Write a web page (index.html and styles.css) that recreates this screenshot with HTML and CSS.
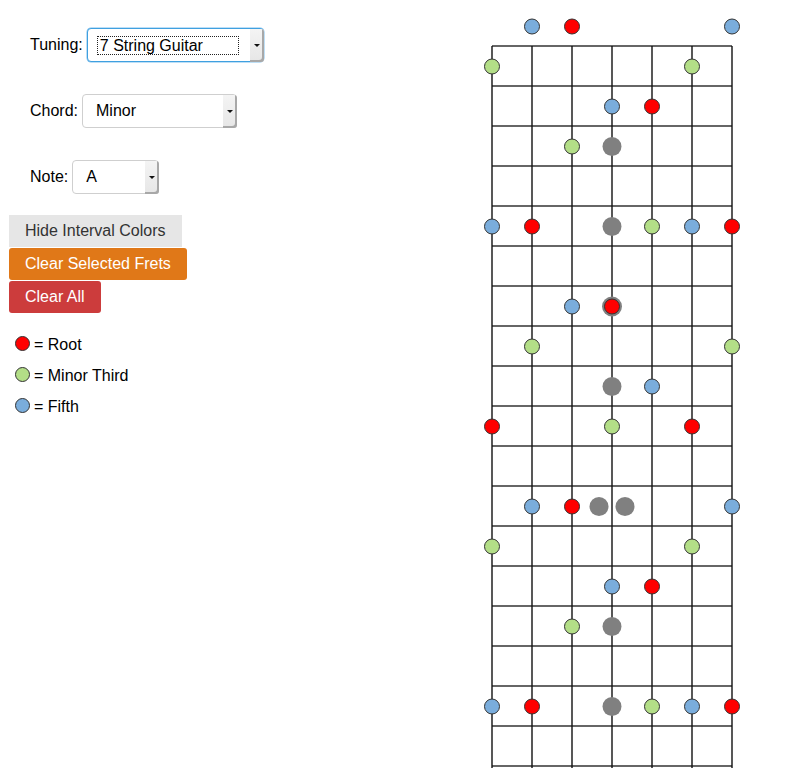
FILE: index.html
```html
<!DOCTYPE html>
<html>
<head>
<meta charset="utf-8">
<link rel="stylesheet" href="styles.css">
</head>
<body>
<div class="page">
  <div class="panel">
    <div class="field field-tuning">
      <span class="label">Tuning:</span>
      <div class="select select-tuning focused">
        <span class="value"><span class="focus-ring">7 String Guitar</span></span>
        <span class="arrow"></span>
      </div>
    </div>
    <div class="field field-chord">
      <span class="label">Chord:</span>
      <div class="select select-chord">
        <span class="value">Minor</span>
        <span class="arrow"></span>
      </div>
    </div>
    <div class="field field-note">
      <span class="label">Note:</span>
      <div class="select select-note">
        <span class="value">A</span>
        <span class="arrow"></span>
      </div>
    </div>
    <div class="buttons">
      <button class="btn btn-gray">Hide Interval Colors</button>
      <button class="btn btn-orange">Clear Selected Frets</button>
      <button class="btn btn-red">Clear All</button>
    </div>
    <ul class="legend">
      <li><span class="dot dot-root"></span>= Root</li>
      <li><span class="dot dot-third"></span>= Minor Third</li>
      <li><span class="dot dot-fifth"></span>= Fifth</li>
    </ul>
  </div>
  <svg class="board" width="300" height="768" viewBox="0 0 300 768">
    <g class="frets">
      <line x1="22" y1="46" x2="262" y2="46"/>
      <line x1="22" y1="86" x2="262" y2="86"/>
      <line x1="22" y1="126" x2="262" y2="126"/>
      <line x1="22" y1="166" x2="262" y2="166"/>
      <line x1="22" y1="206" x2="262" y2="206"/>
      <line x1="22" y1="246" x2="262" y2="246"/>
      <line x1="22" y1="286" x2="262" y2="286"/>
      <line x1="22" y1="326" x2="262" y2="326"/>
      <line x1="22" y1="366" x2="262" y2="366"/>
      <line x1="22" y1="406" x2="262" y2="406"/>
      <line x1="22" y1="446" x2="262" y2="446"/>
      <line x1="22" y1="486" x2="262" y2="486"/>
      <line x1="22" y1="526" x2="262" y2="526"/>
      <line x1="22" y1="566" x2="262" y2="566"/>
      <line x1="22" y1="606" x2="262" y2="606"/>
      <line x1="22" y1="646" x2="262" y2="646"/>
      <line x1="22" y1="686" x2="262" y2="686"/>
      <line x1="22" y1="726" x2="262" y2="726"/>
      <line x1="22" y1="766" x2="262" y2="766"/>
    </g>
    <g class="strings">
      <line x1="22" y1="46" x2="22" y2="780"/>
      <line x1="62" y1="46" x2="62" y2="780"/>
      <line x1="102" y1="46" x2="102" y2="780"/>
      <line x1="142" y1="46" x2="142" y2="780"/>
      <line x1="182" y1="46" x2="182" y2="780"/>
      <line x1="222" y1="46" x2="222" y2="780"/>
      <line x1="262" y1="46" x2="262" y2="780"/>
    </g>
    <g class="inlays">
      <circle cx="142" cy="146.5" r="9.5"/>
      <circle cx="142" cy="226.5" r="9.5"/>
      <circle cx="142" cy="306.5" r="10"/>
      <circle cx="142" cy="386.5" r="9.5"/>
      <circle cx="129" cy="506.5" r="9.5"/>
      <circle cx="155" cy="506.5" r="9.5"/>
      <circle cx="142" cy="626.5" r="9.5"/>
      <circle cx="142" cy="706.5" r="9.5"/>
    </g>
    <g class="notes">
      <circle class="n-fifth" cx="62" cy="26.5" r="7.5"/>
      <circle class="n-root" cx="102" cy="26.5" r="7.5"/>
      <circle class="n-fifth" cx="262" cy="26.5" r="7.5"/>

      <circle class="n-third" cx="22" cy="66.5" r="7.5"/>
      <circle class="n-third" cx="222" cy="66.5" r="7.5"/>

      <circle class="n-fifth" cx="142" cy="106.5" r="7.5"/>
      <circle class="n-root" cx="182" cy="106.5" r="7.5"/>

      <circle class="n-third" cx="102" cy="146.5" r="7.5"/>

      <circle class="n-fifth" cx="22" cy="226.5" r="7.5"/>
      <circle class="n-root" cx="62" cy="226.5" r="7.5"/>
      <circle class="n-third" cx="182" cy="226.5" r="7.5"/>
      <circle class="n-fifth" cx="222" cy="226.5" r="7.5"/>
      <circle class="n-root" cx="262" cy="226.5" r="7.5"/>

      <circle class="n-fifth" cx="102" cy="306.5" r="7.5"/>
      <circle class="n-root" cx="142" cy="306.5" r="7.5"/>

      <circle class="n-third" cx="62" cy="346.5" r="7.5"/>
      <circle class="n-third" cx="262" cy="346.5" r="7.5"/>

      <circle class="n-fifth" cx="182" cy="386.5" r="7.5"/>

      <circle class="n-root" cx="22" cy="426.5" r="7.5"/>
      <circle class="n-third" cx="142" cy="426.5" r="7.5"/>
      <circle class="n-root" cx="222" cy="426.5" r="7.5"/>

      <circle class="n-fifth" cx="62" cy="506.5" r="7.5"/>
      <circle class="n-root" cx="102" cy="506.5" r="7.5"/>
      <circle class="n-fifth" cx="262" cy="506.5" r="7.5"/>

      <circle class="n-third" cx="22" cy="546.5" r="7.5"/>
      <circle class="n-third" cx="222" cy="546.5" r="7.5"/>

      <circle class="n-fifth" cx="142" cy="586.5" r="7.5"/>
      <circle class="n-root" cx="182" cy="586.5" r="7.5"/>

      <circle class="n-third" cx="102" cy="626.5" r="7.5"/>

      <circle class="n-fifth" cx="22" cy="706.5" r="7.5"/>
      <circle class="n-root" cx="62" cy="706.5" r="7.5"/>
      <circle class="n-third" cx="182" cy="706.5" r="7.5"/>
      <circle class="n-fifth" cx="222" cy="706.5" r="7.5"/>
      <circle class="n-root" cx="262" cy="706.5" r="7.5"/>
    </g>
  </svg>
</div>
</body>
</html>
```
FILE: styles.css
```css
html, body {
  margin: 0;
  padding: 0;
  background: #fff;
}
body {
  font-family: "Liberation Sans", Arial, sans-serif;
  font-size: 16px;
  color: #000;
  overflow: hidden;
}
.page {
  display: flex;
  align-items: flex-start;
  width: 798px;
  height: 768px;
}
.panel {
  width: 470px;
  flex: none;
  padding-top: 28px;
}
.field {
  display: flex;
  align-items: center;
  gap: 4px;
  padding-left: 30px;
  height: 34px;
  margin-bottom: 32px;
}
.label {
  line-height: 34px;
}
.select {
  box-sizing: border-box;
  height: 34px;
  display: flex;
  align-items: stretch;
  border: 1px solid #cfcfcf;
  border-radius: 4px;
  background: #fff;
}
.select-tuning { width: 177px; }
.select-chord { width: 155px; }
.select-note { width: 87px; }
.select.focused {
  border-color: #3fa0e0;
  box-shadow: 0 0 0 0.5px #7fc0ee;
}
.value {
  flex: 1;
  display: flex;
  align-items: center;
  padding-left: 13px;
  font-size: 16px;
}
.select-tuning .value {
  padding-left: 9px;
}
.focus-ring {
  display: block;
  width: 142px;
  box-sizing: border-box;
  border: 1px dotted #222;
  padding: 1px 0 0 2px;
  line-height: 16px;
  height: 19px;
}
.arrow {
  width: 14px;
  flex: none;
  position: relative;
  background: linear-gradient(#f4f4f4, #e6e6e6);
  border-radius: 0 3px 3px 0;
  box-shadow: inset -2px -2px 0 #a8a8a8;
  margin: 0 -1px -1px 0;
}
.arrow::after {
  content: "";
  position: absolute;
  left: 4px;
  top: 50%;
  margin-top: -2px;
  border-left: 3px solid transparent;
  border-right: 3px solid transparent;
  border-top: 3px solid #111;
}
.buttons {
  display: flex;
  flex-direction: column;
  align-items: flex-start;
  gap: 1px;
  padding-left: 9px;
  margin-top: -11px;
}
.btn {
  font-family: "Liberation Sans", Arial, sans-serif;
  font-size: 16px;
  height: 32px;
  padding: 0 16px;
  border: none;
  border-radius: 3px;
  line-height: 32px;
  cursor: pointer;
}
.btn-gray {
  background: #e6e6e6;
  color: #333;
  border-radius: 0;
}
.btn-orange {
  background: #e07818;
  color: #fff;
}
.btn-red {
  background: #cc3c3c;
  color: #fff;
}
.legend {
  list-style: none;
  margin: 16px 0 0 0;
  padding: 0 0 0 15px;
}
.legend li {
  display: flex;
  align-items: center;
  height: 31px;
  line-height: 31px;
}
.dot {
  box-sizing: border-box;
  width: 15px;
  height: 15px;
  border-radius: 50%;
  border: 1px solid #333;
  margin-right: 4px;
  margin-top: -3px;
}
.dot-root { background: #ff0000; }
.dot-third { background: #b3de87; }
.dot-fifth { background: #7aaddc; }
.board {
  flex: none;
  display: block;
}
.frets line {
  stroke: #333;
  stroke-width: 1.6;
}
.strings line {
  stroke: #111;
  stroke-width: 1.4;
}
.inlays circle {
  fill: #808080;
}
.notes circle {
  stroke: #333;
  stroke-width: 1;
}
.n-root { fill: #ff0000; }
.n-third { fill: #b3de87; }
.n-fifth { fill: #7aaddc; }
```
